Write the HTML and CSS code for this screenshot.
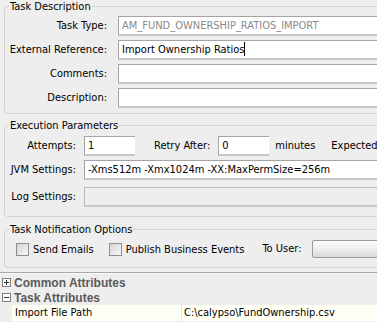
FILE: index.html
```html
<!DOCTYPE html>
<html lang="en">
<head>
<meta charset="UTF-8" />
<title>Task Editor</title>
<link rel="stylesheet" href="styles.css">
</head>
<body>
<div class="page">

  <!-- Task Description -->
  <fieldset class="group desc">
    <legend>Task Description</legend>
    <div class="form-grid">
      <label>Task Type:</label>
      <div class="field readonly">AM_FUND_OWNERSHIP_RATIOS_IMPORT</div>
      <label>External Reference:</label>
      <div class="field">Import Ownership Ratios<span class="caret"></span></div>
      <label>Comments:</label>
      <div class="field"></div>
      <label>Description:</label>
      <div class="field"></div>
    </div>
  </fieldset>

  <!-- Execution Parameters -->
  <fieldset class="group exec">
    <legend>Execution Parameters</legend>
    <div class="exec-grid">
      <label class="r1">Attempts:</label>
      <div class="inline-row r1">
        <div class="field small">1</div>
        <span class="txt retry">Retry After:</span>
        <div class="field small">0</div>
        <span class="txt minutes">minutes</span>
        <span class="txt expected">Expected</span>
      </div>
      <label class="r2">JVM Settings:</label>
      <div class="field r2">-Xms512m -Xmx1024m -XX:MaxPermSize=256m</div>
      <label class="r3">Log Settings:</label>
      <div class="field disabled r3"></div>
    </div>
  </fieldset>

  <!-- Task Notification Options -->
  <fieldset class="group notif">
    <legend>Task Notification Options</legend>
    <div class="notif-row">
      <span class="check"><span class="box"></span>Send Emails</span>
      <span class="check"><span class="box"></span>Publish Business Events</span>
      <span class="txt touser">To User:</span>
      <div class="combo"></div>
    </div>
  </fieldset>

  <div class="separator"></div>

  <!-- properties -->
  <div class="tree-head first">
    <svg class="toggle" width="9" height="9" viewBox="0 0 9 9"><rect x="0.5" y="0.5" width="8" height="8" fill="#fff" stroke="#7f7f7f"/><path d="M2 4.5h5M4.5 2v5" stroke="#333"/></svg>
    Common Attributes
  </div>
  <div class="tree-head">
    <svg class="toggle" width="9" height="9" viewBox="0 0 9 9"><rect x="0.5" y="0.5" width="8" height="8" fill="#fff" stroke="#7f7f7f"/><path d="M2 4.5h5" stroke="#333"/></svg>
    Task Attributes
  </div>
  <div class="prop-row">
    <span class="prop-name">Import File Path</span>
    <span class="prop-value">C:\calypso\FundOwnership.csv</span>
  </div>

</div>
</body>
</html>
```

FILE: styles.css
```css
/* Swing-like task editor panel */

body {
  margin: 0;
  background: #eeeeee;
  overflow: hidden;
  font-family: "DejaVu Sans Condensed", "Liberation Sans", Arial, sans-serif;
  font-size: 11px;
  color: #000;
}

.page {
  width: 440px;
  height: 322px;
  overflow: hidden;
}

label, .txt, .check, legend { white-space: nowrap; }

.group {
  margin: 0 0 0 4px;
  padding: 0;
  border: 1px solid #d2d2d2;
  border-radius: 4px;
  min-width: 0;
}
.group legend {
  padding: 0 1px;
  margin-left: 4px;
  line-height: 13px;
  font-size: 11px;
}

/* text field look */
.field {
  height: 20px;
  box-sizing: border-box;
  background: #fff;
  border-top: 1px solid #a5a5a5;
  border-left: 1px solid #a5a5a5;
  border-bottom: 2px solid #c8c8c8;
  padding: 0 3px;
  line-height: 17px;
  white-space: nowrap;
  overflow: hidden;
}
.field.readonly { color: #8a8a8a; }
.field.disabled { background: #eeeeee; border-left-color: #b8b8b8; border-top-color: #b8b8b8; }
.caret {
  display: inline-block;
  width: 1px; height: 14px;
  background: #000;
  vertical-align: -3px;
}

/* Task Description */
.form-grid {
  display: grid;
  grid-template-columns: 102px 1fr;
  column-gap: 11px;
  row-gap: 4px;
  padding: 3px 0 5px;
}
.form-grid label {
  text-align: right;
  line-height: 20px;
}

/* Execution Parameters */
.exec {
  margin-top: 5px;
}
.exec-grid {
  display: grid;
  grid-template-columns: 71px 1fr;
  column-gap: 8px;
  padding: 4px 0 9px;
}
.exec-grid label {
  text-align: right;
  line-height: 20px;
}
.exec-grid .r2 { margin-top: 4px; }
.exec-grid .r3 { margin-top: 7px; }

.inline-row {
  display: flex;
  align-items: center;
}
.field.small { width: 51px; }
.txt { line-height: 20px; }
.retry { margin-left: 19px; margin-right: 8px; }
.minutes { margin-left: 6px; }
.expected { margin-left: 16px; }

/* Notification options */
.notif {
  margin-top: 6px;
}
.notif-row {
  display: flex;
  align-items: center;
  padding: 4px 0 9px 11px;
}
.notif-row .txt { line-height: 18px; }
.check {
  display: flex;
  align-items: center;
  margin-right: 15px;
}
.box {
  width: 11px; height: 11px;
  border: 1px solid #8e8e8e;
  background: linear-gradient(135deg, #d4d4d4, #f7f7f7);
  margin-right: 4px;
}
.touser { margin-left: 3px; margin-right: 11px; }
.combo {
  width: 90px; height: 18px;
  box-sizing: border-box;
  border: 1px solid #9a9a9a;
  border-radius: 2px;
  background: linear-gradient(#fafafa, #f0f0f0 45%, #d8d8d8);
}

.separator {
  margin-top: 4px;
  height: 1px;
  background: #a8a8a8;
  border-bottom: 1px solid #fafafa;
}

/* property sheet */
.tree-head {
  display: flex;
  align-items: center;
  height: 15px;
  padding-left: 2px;
  font-family: "Liberation Sans", Arial, sans-serif;
  font-weight: bold;
  color: #5a5a5a;
  font-size: 12px;
  white-space: nowrap;
}
.tree-head.first { margin-top: 1px; }
.toggle { margin-right: 3px; }

.prop-row {
  display: flex;
  margin-left: 12px;
  height: 16px;
  line-height: 16px;
  background: #fffff4;
  white-space: nowrap;
}
.prop-name {
  width: 166px;
  padding-left: 3px;
  border-right: 1px solid #e0e0d8;
}
.prop-value {
  padding-left: 2px;
}
```
